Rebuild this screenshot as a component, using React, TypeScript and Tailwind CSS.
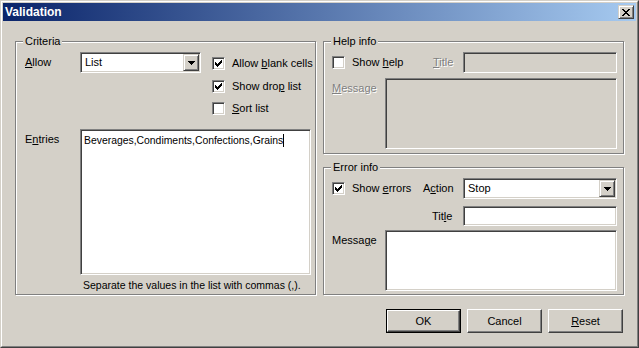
import React from 'react'

const sunken =
  'border border-t-[#808080] border-l-[#808080] border-b-white border-r-white shadow-[inset_1px_1px_0_#404040,inset_-1px_-1px_0_#d4d0c8]'
const raised =
  'border border-t-[#d4d0c8] border-l-[#d4d0c8] border-b-[#404040] border-r-[#404040] shadow-[inset_1px_1px_0_#fff,inset_-1px_-1px_0_#808080]'

function Key({ children }: { children: React.ReactNode }) {
  return <span className="underline decoration-1 underline-offset-[1px]">{children}</span>
}

function Check({ checked }: { checked?: boolean }) {
  return (
    <span className={`relative block w-[13px] h-[13px] shrink-0 bg-white ${sunken}`}>
      {checked && (
        <svg className="absolute left-[2px] top-[2px]" width="7" height="7" viewBox="0 0 7 7" shapeRendering="crispEdges">
          <path
            fill="#000"
            d="M6 0h1v1h-1z M5 1h2v1h-2z M0 2h1v1h-1z M4 2h3v1h-3z M0 3h2v1h-2z M3 3h3v1h-3z M0 4h5v1h-5z M1 5h3v1h-3z M2 6h1v1h-1z"
          />
        </svg>
      )}
    </span>
  )
}

function Combo({ value, width }: { value: string; width: string }) {
  return (
    <div className={`flex h-[21px] p-[1px] bg-white shrink-0 ${sunken} ${width}`}>
      <span className="flex-1 pl-[3px] leading-[17px]">{value}</span>
      <span className={`w-[16px] h-[17px] flex items-center justify-center bg-[#d4d0c8] ${raised}`}>
        <svg width="7" height="4" viewBox="0 0 7 4" shapeRendering="crispEdges">
          <path fill="#000" d="M0 0h7v1h-7z M1 1h5v1h-5z M2 2h3v1h-3z M3 3h1v1h-1z" />
        </svg>
      </span>
    </div>
  )
}

function Group({ label, className, children }: { label: string; className: string; children: React.ReactNode }) {
  return (
    <div className={`relative border border-[#808080] shadow-[1px_1px_0_#fff,inset_1px_1px_0_#fff] ${className}`}>
      <span className="absolute -top-[7px] left-[7px] px-[2px] bg-[#d4d0c8] leading-[13px]">{label}</span>
      {children}
    </div>
  )
}

function PushButton({ children, isDefault }: { children: React.ReactNode; isDefault?: boolean }) {
  return (
    <div className={`w-[75px] h-[24px] ${isDefault ? 'border border-black' : ''}`}>
      <div className="h-full flex items-center justify-center border border-t-white border-l-white border-b-[#404040] border-r-[#404040] shadow-[inset_-1px_-1px_0_#808080]">
        {children}
      </div>
    </div>
  )
}

export default function App() {
  return (
    <div className="w-[639px] h-[348px] bg-[#d4d0c8] text-black text-[11px] leading-[13px] font-['Liberation_Sans',Arial,sans-serif] border border-t-[#d4d0c8] border-l-[#d4d0c8] border-b-[#404040] border-r-[#404040]">
      <div className="h-full flex flex-col p-[1px] border border-t-white border-l-white border-b-[#808080] border-r-[#808080]">
        {/* Title bar */}
        <div className="h-[18px] flex items-center pl-[2px] pr-[2px] bg-[linear-gradient(to_right,#0a246a,#a6caf0)]">
          <span className="flex-1 text-white font-bold text-[12px]">Validation</span>
          <span className={`w-[16px] h-[14px] flex items-center justify-center bg-[#d4d0c8] ${raised}`}>
            <svg width="8" height="7" viewBox="0 0 8 7" shapeRendering="crispEdges">
              <path
                fill="#000"
                d="M0 0h2v1h-2z M6 0h2v1h-2z M1 1h2v1h-2z M5 1h2v1h-2z M2 2h4v1h-4z M3 3h2v1h-2z M2 4h4v1h-4z M1 5h2v1h-2z M5 5h2v1h-2z M0 6h2v1h-2z M6 6h2v1h-2z"
              />
            </svg>
          </span>
        </div>

        {/* Body */}
        <div className="flex gap-[7px] pl-[12px] pt-[20px]">
          <Group label="Criteria" className="w-[301px] h-[254px] pl-[9px] pt-[10px]">
            <div className="flex items-start">
              <div className="w-[55px] h-[21px] flex items-center">
                <Key>A</Key>llow
              </div>
              <Combo value="List" width="w-[121px]" />
              <div className="ml-[11px] pt-[5px] flex flex-col">
                <div className="flex items-center gap-[7px]">
                  <Check checked />
                  <span>
                    Allow <Key>b</Key>lank cells
                  </span>
                </div>
                <div className="flex items-center gap-[7px] mt-[10px]">
                  <Check checked />
                  <span>
                    Show dro<Key>p</Key> list
                  </span>
                </div>
                <div className="flex items-center gap-[7px] mt-[9px]">
                  <Check />
                  <span>
                    <Key>S</Key>ort list
                  </span>
                </div>
              </div>
            </div>
            <div className="flex items-start mt-[14px]">
              <div className="w-[55px] pt-[4px]">
                E<Key>n</Key>tries
              </div>
              <div className="flex flex-col">
                <div className={`w-[231px] h-[146px] bg-white pl-[3px] pt-[4px] flex items-start text-[10.4px] ${sunken}`}>
                  <span>Beverages,Condiments,Confections,Grains</span>
                  <span className="w-[1px] h-[13px] bg-black" />
                </div>
                <div className="mt-[4px] pl-[3px] text-[10.5px]">Separate the values in the list with commas (,).</div>
              </div>
            </div>
          </Group>

          <div className="w-[301px] flex flex-col">
            <Group label="Help info" className="h-[113px] pl-[8px] pt-[10px]">
              <div className="flex items-center">
                <div className="w-[101px] flex items-center gap-[7px]">
                  <Check />
                  <span>
                    Show <Key>h</Key>elp
                  </span>
                </div>
                <span className="w-[30px] text-[#808080] [text-shadow:1px_1px_0_#fff]">
                  <Key>T</Key>itle
                </span>
                <div className={`w-[154px] h-[21px] bg-[#d4d0c8] ${sunken}`} />
              </div>
              <div className="flex items-start mt-[5px]">
                <span className="w-[53px] pt-[4px] text-[#808080] [text-shadow:1px_1px_0_#fff]">
                  <Key>M</Key>essage
                </span>
                <div className={`w-[232px] h-[71px] bg-[#d4d0c8] ${sunken}`} />
              </div>
            </Group>

            <Group label="Error info" className="mt-[13px] h-[128px] pl-[8px] pt-[10px]">
              <div className="flex items-center">
                <div className="w-[91px] flex items-center gap-[7px]">
                  <Check checked />
                  <span>
                    Show <Key>e</Key>rrors
                  </span>
                </div>
                <span className="w-[40px]">
                  A<Key>c</Key>tion
                </span>
                <Combo value="Stop" width="w-[154px]" />
              </div>
              <div className="flex items-center mt-[7px] pl-[100px]">
                <span className="w-[31px]">
                  Tit<Key>l</Key>e
                </span>
                <div className={`w-[154px] h-[20px] bg-white ${sunken}`} />
              </div>
              <div className="flex items-start mt-[4px]">
                <span className="w-[53px] pt-[4px]">
                  Messa<Key>g</Key>e
                </span>
                <div className={`w-[232px] h-[61px] bg-white ${sunken}`} />
              </div>
            </Group>
          </div>
        </div>

        {/* Buttons */}
        <div className="flex justify-end gap-[6px] pr-[13px] mt-[14px]">
          <PushButton isDefault>OK</PushButton>
          <PushButton>Cancel</PushButton>
          <PushButton>
            <span>
              <Key>R</Key>eset
            </span>
          </PushButton>
        </div>
      </div>
    </div>
  )
}
